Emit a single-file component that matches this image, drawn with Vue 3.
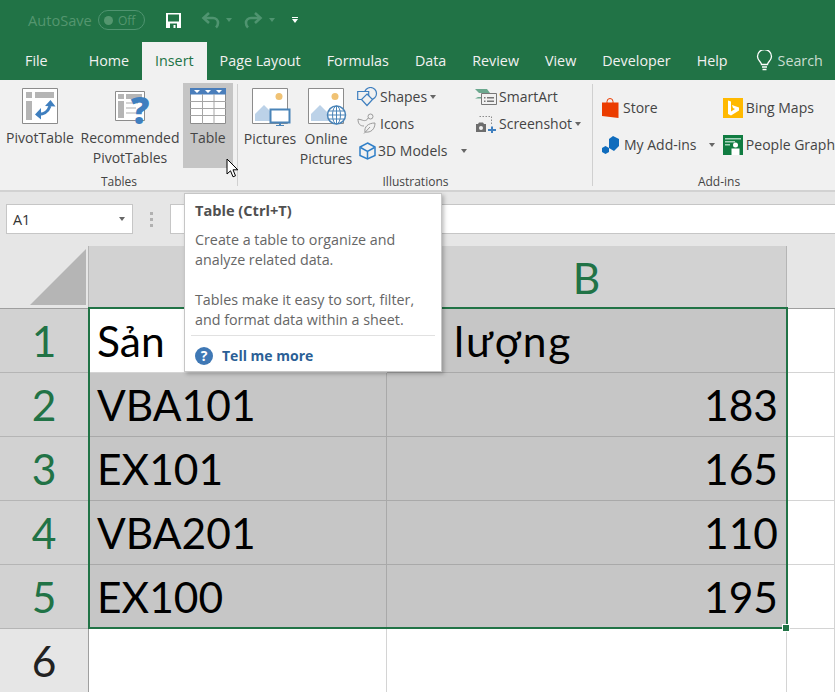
<template>
  <div class="app">
    <div class="titlebar">
      <span class="autosave">AutoSave</span>
      <span class="toggle"><i class="knob"></i>Off</span>
      <svg class="qa save" width="17" height="17" viewBox="0 0 17 17">
        <path d="M1 1h15v15H1z" fill="#fff" />
        <path d="M3 2.500h11v7H3z" fill="#217346" />
        <path d="M5 11.500h7V16H5z" fill="#217346" />
        <path d="M8.500 13h2v3h-2z" fill="#fff" />
      </svg>
      <svg class="qa undo" width="20" height="18" viewBox="0 0 20 18" fill="none" stroke="#4f9470" stroke-width="2.600">
        <path d="M8 2 2.500 7 8 12" />
        <path d="M3 7h9a5 5 0 0 1 5 5c0 2-1 3.500-2 4.500" />
      </svg>
      <i class="tri dim undo-caret"></i>
      <svg class="qa redo" width="20" height="18" viewBox="0 0 20 18" fill="none" stroke="#4f9470" stroke-width="2.600">
        <path d="M12 2 17.500 7 12 12" />
        <path d="M17 7H8a5 5 0 0 0-5 5c0 2 1 3.500 2 4.500" />
      </svg>
      <i class="tri dim redo-caret"></i>
      <span class="customize"><i class="bar"></i><i class="tri white"></i></span>
    </div>

    <div class="tabs">
      <span v-for="t in tabs" :key="t" class="tab" :class="{ active: t === 'Insert', file: t === 'File' }">{{ t }}</span>
      <span class="search">
        <svg width="17" height="21" viewBox="0 0 17 21" fill="none" stroke="#fff" stroke-width="1.300">
          <path d="M5.500 14.500c0-2.500-4-4-4-8a7 7 0 0 1 14 0c0 4-4 5.500-4 8z" />
          <path d="M6 17h5M6.500 19.500h4" />
        </svg>
        Search
      </span>
    </div>

    <div class="ribbon">
      <div class="group g-tables">
        <div class="group-body">
          <div class="big b-pivot">
            <svg width="36" height="36" viewBox="0 0 36 36">
              <path d="M.5.500h35v35H.5z" fill="#fff" stroke="#8c8c8c" />
              <path d="M4 4h6v6H4zM13 4h19v6H13zM4 13h6v19H4z" fill="#b5b5b5" />
              <path d="M15 26c6 1 11-2 13-8" fill="none" stroke="#3f7fbf" stroke-width="3" />
              <path d="M23 18l5.500-6 5 6.500zM19 20l-6 6.500 6 5z" fill="#3f7fbf" />
            </svg>
            <span>PivotTable</span>
          </div>
          <div class="big b-rec">
            <svg width="40" height="40" viewBox="0 0 40 40">
              <path d="M5.500 3.500h29v29h-29z" fill="#fff" stroke="#8c8c8c" />
              <path d="M8 6h6v5H8zM16 6h16v5H16zM8 13h6v17H8z" fill="#b5b5b5" />
              <path d="M16 14h12v2H16zM16 19h10v2H16zM16 24h12v2H16z" fill="#d6d6d6" />
              <text x="30" y="36" class="qmark">?</text>
            </svg>
            <span>Recommended<br />PivotTables</span>
          </div>
          <div class="big b-table">
            <svg width="36" height="36" viewBox="0 0 36 36">
              <path d="M.5.500h35v35H.5z" fill="#fff" stroke="#8c8c8c" />
              <path d="M0 0h36v6.500H0z" fill="#4a7ebb" />
              <path d="M4 2h6l-3 3zM15 2h6l-3 3zM26 2h6l-3 3z" fill="#fff" />
              <path d="M12.500 6v30M24 6v30M0 13.500h36M0 20.500h36M0 27.500h36" stroke="#a6a6a6" fill="none" />
            </svg>
            <span>Table</span>
          </div>
        </div>
        <div class="group-label">Tables</div>
      </div>

      <div class="group g-illus">
        <div class="group-body">
          <div class="big b-pic">
            <svg width="39" height="38" viewBox="0 0 39 38">
              <path d="M.5.500h35v35H.5z" fill="#fff" stroke="#8c8c8c" />
              <circle cx="27" cy="8.500" r="3.500" fill="#f0c274" />
              <path d="M3 33V26l9-9 9 9v7z" fill="#bcd2e8" />
              <path d="M18.500 21.500h19v13h-19z" fill="#fff" stroke="#4a84b8" stroke-width="2" />
              <path d="M27 35h2v2h3v1h-8v-1h3z" fill="#4a84b8" />
            </svg>
            <span>Pictures</span>
          </div>
          <div class="big b-online">
            <svg width="39" height="38" viewBox="0 0 39 38">
              <path d="M.5.500h35v35H.5z" fill="#fff" stroke="#8c8c8c" />
              <circle cx="27" cy="8.500" r="3.500" fill="#f0c274" />
              <path d="M3 33V26l9-9 9 9v7z" fill="#bcd2e8" />
              <circle cx="28.500" cy="27" r="9" fill="#fff" stroke="#4a84b8" stroke-width="1.500" />
              <path d="M19.500 27h18M20.500 23h16M20.500 31h16M28.500 18v18" stroke="#4a84b8" fill="none" />
              <ellipse cx="28.500" cy="27" rx="4" ry="9" stroke="#4a84b8" fill="none" />
            </svg>
            <span>Online<br />Pictures</span>
          </div>
          <div class="stack s-shapes">
            <div class="item">
              <svg width="21" height="20" viewBox="0 0 21 20" fill="none" stroke="#3f7fbf" stroke-width="1.200">
                <circle cx="13.500" cy="6.500" r="6" />
                <path d="M.7 4.500h11v8H.7z" fill="#f1f1f1" />
                <path d="M10 7l5.500 5.500L10 18.500 4.500 12.500z" fill="#f1f1f1" />
              </svg>
              <span>Shapes</span><i class="tri"></i>
            </div>
            <div class="item">
              <svg width="21" height="21" viewBox="0 0 21 21" fill="none" stroke="#9a9a9a">
                <circle cx="13.500" cy="3.500" r="2.500" />
                <path d="M11 5c-1 3-4 3-6 2l-4-1c0 5 2 7 6 7" />
                <path d="M8 19c-1-5 3-9 10-9 0 6-4 10-10 9zM7 20.500 13 14" />
              </svg>
              <span>Icons</span>
            </div>
            <div class="item">
              <svg class="cube" width="17" height="18" viewBox="0 0 17 18" fill="none" stroke="#2f7fc8" stroke-width="1.500">
                <path d="M8.500 1 16 5v8.500L8.500 17 1 13.500V5z" />
                <path d="M1.500 5.500 8.500 9.500 15.500 5.500M8.500 9.500V17" />
              </svg>
              <span>3D Models</span><i class="tri far"></i>
            </div>
          </div>
          <div class="stack s-smart">
            <div class="item">
              <svg width="22" height="17" viewBox="0 0 22 17">
                <path d="M0 1h12l3 4H4zM3 9h5v1.500H0z" fill="#6ba88e" />
                <path d="M6.500 5.500h15v11h-15z" fill="#f1f1f1" stroke="#777" />
                <path d="M9 9h1.500v1.500H9zM12 9h7v1.500h-7zM9 12.500h1.500V14H9zM12 12.500h7V14h-7z" fill="#777" />
              </svg>
              <span>SmartArt</span>
            </div>
            <div class="item">
              <svg width="22" height="18" viewBox="0 0 22 18">
                <path d="M4.500 1.500h12v9" fill="none" stroke="#8c8c8c" stroke-dasharray="1.500 1.500" />
                <path d="M1 9h2l1-1.500h4L9 9h2v8H1z" fill="#6d6d6d" />
                <circle cx="6" cy="13" r="2" fill="#f1f1f1" />
                <path d="M16 11.500h2V14h3v2h-3v2h-2v-2h-3v-2h3z" fill="#3f7fbf" />
              </svg>
              <span>Screenshot</span><i class="tri"></i>
            </div>
          </div>
        </div>
        <div class="group-label">Illustrations</div>
      </div>

      <div class="group g-addins">
        <div class="group-body">
          <div class="stack s-store">
            <div class="item">
              <svg width="17" height="20" viewBox="0 0 17 20">
                <path d="M5 5V3.500a3 3 0 0 1 3-3 3 3 0 0 1 3 3V5" fill="none" stroke="#eb3c00" />
                <path d="M0 4.500h16.500V20L0 18z" fill="#eb3c00" />
              </svg>
              <span>Store</span>
            </div>
            <div class="item">
              <svg width="18" height="18" viewBox="0 0 18 18">
                <path d="M11 0l6 3v7l-5 5-5-3V3z" fill="#0f6cbd" />
                <path d="M3.500 10 7 12v4l-3.500 2L0 16v-4z" fill="#0f6cbd" />
              </svg>
              <span>My Add-ins</span><i class="tri far"></i>
            </div>
          </div>
          <div class="stack s-bing">
            <div class="item">
              <svg width="20" height="20" viewBox="0 0 20 20">
                <path d="M0 0h20v20H0z" fill="#ffb900" />
                <path d="M5 2.500l3 1v10l4-2.500-2-1-1-3 7 2.500v3l-8 5-3-1.500z" fill="#fff" />
              </svg>
              <span>Bing Maps</span>
            </div>
            <div class="item">
              <svg width="20" height="20" viewBox="0 0 20 20">
                <path d="M0 0h20v20H0z" fill="#107c41" />
                <path d="M2 3h16v1.500H2zM2 6h10v1.500H2zM2 9h5v1.500H2z" fill="#a7d3bb" />
                <circle cx="12.500" cy="10" r="2.500" fill="#fff" />
                <path d="M8.500 13.500h8V20h-8z" fill="#fff" />
              </svg>
              <span>People Graph</span>
            </div>
          </div>
        </div>
        <div class="group-label">Add-ins</div>
      </div>
    </div>

    <div class="formula">
      <div class="namebox">A1<i class="tri"></i></div>
      <div class="dots"><i></i><i></i><i></i></div>
      <div class="input"></div>
    </div>

    <div class="sheet">
      <div class="corner">
        <svg width="56" height="56" viewBox="0 0 56 56"><path d="M56 0v56H0z" fill="#b5b5b5" /></svg>
      </div>
      <div class="colhead sel"></div>
      <div class="colhead sel green">B</div>
      <div class="colhead rest"></div>

      <template v-for="(r, i) in rows" :key="i">
        <div class="rowhead" :class="{ sel: i < 5 }">{{ i + 1 }}</div>
        <div class="cell" :class="{ picked: i > 0 && i < 5, first: i === 0 }">{{ r[0] }}</div>
        <div class="cell" :class="{ picked: i < 5, num: i > 0, second: i === 0 }">{{ r[1] }}</div>
        <div class="cell"></div>
      </template>

      <div class="selection"><i class="handle"></i></div>
    </div>

    <div class="tooltip">
      <div class="tip-title">Table (Ctrl+T)</div>
      <p>Create a table to organize and<br />analyze related data.</p>
      <p>Tables make it easy to sort, filter,<br />and format data within a sheet.</p>
      <div class="tip-more">
        <span class="help">?</span>
        <span>Tell me more</span>
      </div>
    </div>

    <svg class="cursor" width="14" height="21" viewBox="0 0 14 21">
      <path d="M1 1v15l3.500-3.200 2.500 6 2.500-1-2.500-6h4.800z" fill="#fff" stroke="#000" />
    </svg>
  </div>
</template>

<script setup>
const tabs = ['File', 'Home', 'Insert', 'Page Layout', 'Formulas', 'Data', 'Review', 'View', 'Developer', 'Help']

const rows = [
  ['Sản phẩm', 'Số lượng'],
  ['VBA101', '183'],
  ['EX101', '165'],
  ['VBA201', '110'],
  ['EX100', '195'],
  ['', '']
]
</script>

<style>
html,
body {
  margin: 0;
  background: #fff;
}
</style>

<style scoped>
.app {
  position: relative;
  width: 835px;
  height: 692px;
  overflow: hidden;
  font-family: "Open Sans", "Noto Sans", sans-serif;
  font-size: 14px;
  color: #444;
}

.titlebar {
  display: flex;
  align-items: center;
  height: 40px;
  background: #217346;
  box-sizing: border-box;
  padding-left: 28px;
}

.autosave {
  color: #54966f;
  font-size: 14.6px;
  width: 70px;
}

.toggle {
  display: flex;
  align-items: center;
  box-sizing: border-box;
  width: 47px;
  height: 20px;
  border: 1px solid #4f9470;
  border-radius: 10px;
  padding-left: 5px;
  gap: 5px;
  color: #54966f;
  font-size: 12px;
}

.knob {
  width: 9px;
  height: 9px;
  border-radius: 50%;
  background: #54966f;
}

.qa {
  display: block;
}

.save {
  margin-left: 20px;
}

.undo {
  margin-left: 19px;
}

.redo {
  margin-left: 11px;
}

.tri {
  display: inline-block;
  width: 0;
  height: 0;
  border-left: 3.5px solid transparent;
  border-right: 3.5px solid transparent;
  border-top: 4px solid #666;
}

.tri.dim {
  border-top-color: #4f9470;
}

.undo-caret {
  margin-left: 5px;
}

.redo-caret {
  margin-left: 6px;
}

.customize {
  display: flex;
  flex-direction: column;
  align-items: center;
  gap: 1px;
  margin-left: 17px;
}

.bar {
  width: 6px;
  height: 1px;
  background: #fff;
}

.tri.white {
  border-top-color: #fff;
}

.tabs {
  display: flex;
  align-items: flex-end;
  height: 40px;
  background: #217346;
  padding-left: 12px;
}

.tab {
  box-sizing: border-box;
  height: 38px;
  line-height: 38px;
  padding: 0 13px;
  color: #f1f1f1;
  font-size: 14.3px;
  white-space: nowrap;
}

.tab.file {
  margin-right: 15px;
}

.tab.active {
  background: #f1f1f1;
  color: #217346;
}

.search {
  display: flex;
  align-items: center;
  gap: 5px;
  height: 38px;
  box-sizing: border-box;
  padding-bottom: 2px;
  margin-left: 15px;
  color: #c9ddd1;
  font-size: 14.3px;
  white-space: nowrap;
}

.ribbon {
  display: flex;
  box-sizing: border-box;
  height: 112px;
  background: #f1f1f1;
  border-bottom: 2px solid #d2d2d2;
  white-space: nowrap;
}

.group {
  position: relative;
  display: flex;
  flex: none;
  flex-direction: column;
  box-sizing: border-box;
  height: 110px;
}

.g-tables::after,
.g-illus::after {
  content: "";
  position: absolute;
  right: 0;
  top: 4px;
  bottom: 4px;
  width: 1px;
  background: #d0d0d0;
}

.g-tables {
  width: 238px;
}

.g-illus {
  width: 355px;
}

.g-addins {
  width: 242px;
}

.group-body {
  display: flex;
  flex: 1;
  padding-top: 3px;
}

.group-label {
  box-sizing: border-box;
  height: 22px;
  padding-top: 4px;
  line-height: 19px;
  text-align: center;
  font-size: 12px;
  color: #444;
}

.g-addins .group-label {
  padding-left: 10px;
}

.big {
  display: flex;
  flex-direction: column;
  align-items: center;
  box-sizing: border-box;
  height: 85px;
  padding-top: 5px;
  text-align: center;
  line-height: 20px;
}

.big svg {
  flex: none;
  margin-bottom: 4px;
}

.b-pivot {
  width: 80px;
}

.b-rec {
  width: 100px;
  margin-right: 3px;
}

.b-rec svg {
  margin-bottom: 0;
}

.b-table {
  width: 50px;
  background: #c5c5c5;
}

.b-pic {
  width: 62px;
  margin-left: 1px;
}

.b-online {
  width: 50px;
}

.b-pic svg,
.b-online svg {
  margin: 0 0 3px 2px;
}

.big span {
  display: block;
}

.stack {
  display: flex;
  flex-direction: column;
}

.item {
  display: flex;
  align-items: center;
  height: 27px;
}

.s-shapes {
  width: 118px;
  margin-left: 6px;
}

.s-shapes .item svg,
.s-smart .item svg {
  margin-right: 2px;
  flex: none;
}

.s-shapes .cube {
  margin: 0 3px 0 2px;
}

.s-shapes .tri,
.s-smart .tri {
  margin-left: 3px;
}

.s-shapes .tri.far {
  margin-left: 14px;
}

.g-addins .stack {
  padding-top: 6px;
}

.g-addins .item {
  height: 37px;
  gap: 4px;
}

.s-store {
  width: 121px;
  margin-left: 9px;
}

.s-store .item svg {
  flex: none;
}

.s-store .tri.far {
  margin-left: 8px;
}

.s-bing .item {
  gap: 3px;
}

.formula {
  display: flex;
  align-items: flex-start;
  box-sizing: border-box;
  height: 54px;
  padding-top: 12px;
  background: #e6e6e6;
}

.namebox {
  display: flex;
  align-items: center;
  justify-content: space-between;
  box-sizing: border-box;
  width: 127px;
  height: 30px;
  margin-left: 6px;
  padding: 0 7px 0 6px;
  background: #fff;
  border: 1px solid #c6c6c6;
  font-size: 14.4px;
  color: #333;
}

.dots {
  display: flex;
  flex-direction: column;
  gap: 3px;
  margin: 8px 0 0 17px;
}

.dots i {
  width: 3px;
  height: 3px;
  background: #b1b1b1;
}

.input {
  flex: 1;
  height: 30px;
  box-sizing: border-box;
  margin-left: 17px;
  background: #fff;
  border-top: 1px solid #c6c6c6;
  border-bottom: 1px solid #c6c6c6;
  border-left: 1px solid #c6c6c6;
}

.sheet {
  position: relative;
  display: grid;
  grid-template-columns: 89px 298px 400px 48px;
  grid-template-rows: 63px repeat(6, 64px);
  font-family: Lato, "Noto Sans", sans-serif;
  font-size: 42.5px;
  color: #000;
}

.corner {
  display: flex;
  align-items: flex-end;
  justify-content: flex-end;
  box-sizing: border-box;
  padding: 0 2px 3px 0;
  background: #e6e6e6;
  border-right: 1px solid #b5b5b5;
  border-bottom: 1px solid #9f9f9f;
}

.colhead {
  box-sizing: border-box;
  text-align: center;
  line-height: 63px;
  background: #e6e6e6;
  border-bottom: 1px solid #9f9f9f;
}

.colhead.sel {
  background: #d2d2d2;
  border-right: 1px solid #b5b5b5;
}

.colhead.green {
  color: #217346;
}

.rowhead {
  box-sizing: border-box;
  text-align: center;
  line-height: 63px;
  background: #e6e6e6;
  color: #222;
  border-right: 1px solid #9f9f9f;
  border-bottom: 1px solid #c6c6c6;
}

.rowhead.sel {
  background: #d2d2d2;
  color: #217346;
  border-bottom-color: #b5b5b5;
}

.cell {
  box-sizing: border-box;
  padding: 0 8px;
  line-height: 64px;
  white-space: nowrap;
  background: #fff;
  border-right: 1px solid #d4d4d4;
  border-bottom: 1px solid #d4d4d4;
}

.cell.first {
  word-spacing: 10px;
  overflow: hidden;
}

.cell.second {
  padding-left: 3px;
  letter-spacing: 2px;
}

.cell.picked {
  background: #c6c6c6;
  border-right-color: #a9a9a9;
  border-bottom-color: #a9a9a9;
}

.cell.num {
  text-align: right;
}

/* selection sits over the first five rows */
.selection {
  position: absolute;
  left: 88px;
  top: 61px;
  width: 700px;
  height: 322px;
  box-sizing: border-box;
  border: 2px solid #217346;
  pointer-events: none;
}

.handle {
  position: absolute;
  right: -4px;
  bottom: -5px;
  width: 6px;
  height: 6px;
  background: #217346;
  border: 1px solid #fff;
}

.tooltip {
  position: absolute;
  left: 184px;
  top: 193px;
  width: 258px;
  height: 179px;
  box-sizing: border-box;
  padding: 6px 10px 0;
  background: #fff;
  border: 1px solid #c6c6c6;
  box-shadow: 2px 2px 4px rgba(0, 0, 0, 0.25);
  font-size: 14.3px;
  line-height: 20px;
  color: #666;
  white-space: nowrap;
}

.tip-title {
  font-weight: 700;
  font-size: 14.6px;
  color: #505050;
}

.tooltip p {
  margin: 10px 0 20px;
}

.tooltip p + p {
  margin: 0;
}

.tip-more {
  display: flex;
  align-items: center;
  gap: 9px;
  margin: 5px -4px 0;
  padding: 10px 0 0 4px;
  border-top: 1px solid #e1e1e1;
  font-size: 14px;
  font-weight: 700;
  color: #2b5f96;
}

.help {
  display: block;
  width: 18px;
  height: 18px;
  border-radius: 50%;
  background: #3f78b5;
  color: #fff;
  text-align: center;
  font-size: 14px;
  line-height: 18px;
}

.qmark {
  font-family: "Open Sans", sans-serif;
  font-weight: 800;
  font-size: 37px;
  fill: #3f7fbf;
  text-anchor: middle;
}

.cursor {
  position: absolute;
  left: 226px;
  top: 158px;
}
</style>
